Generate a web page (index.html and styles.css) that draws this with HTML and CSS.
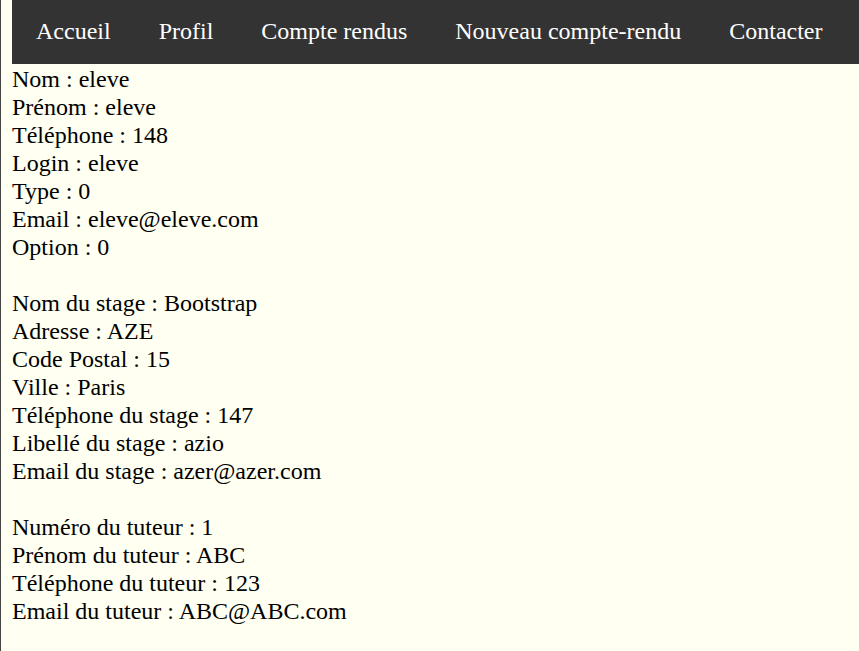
FILE: index.html
```html
<!DOCTYPE html>
<html lang="fr">
<head>
    <meta charset="UTF-8">
    <title>Profil</title>
    <link rel="stylesheet" href="styles.css">
</head>
<body>
    <ul class="menu">
        <li><a href="#">Accueil</a></li>
        <li><a href="#">Profil</a></li>
        <li><a href="#">Compte rendus</a></li>
        <li><a href="#">Nouveau compte-rendu</a></li>
        <li><a href="#">Contacter</a></li>
    </ul>

    <div class="infos">
        Nom : eleve<br>
        Prénom : eleve<br>
        Téléphone : 148<br>
        Login : eleve<br>
        Type : 0<br>
        Email : eleve@eleve.com<br>
        Option : 0<br>
        <br>
        Nom du stage : Bootstrap<br>
        Adresse : AZE<br>
        Code Postal : 15<br>
        Ville : Paris<br>
        Téléphone du stage : 147<br>
        Libellé du stage : azio<br>
        Email du stage : azer@azer.com<br>
        <br>
        Numéro du tuteur : 1<br>
        Prénom du tuteur : ABC<br>
        Téléphone du tuteur : 123<br>
        Email du tuteur : ABC@ABC.com
    </div>
</body>
</html>
```

FILE: styles.css
```css
html {
    border-left: 1px solid #444;
    min-height: 100%;
    box-sizing: border-box;
    background: #fffff2;
}

body {
    margin: 0 0 0 11px;
    font-family: "Liberation Serif", "Times New Roman", serif;
    font-size: 24px;
    line-height: 28px;
    color: #000;
}

.menu {
    list-style: none;
    margin: 0;
    padding: 0;
    height: 64px;
    background: #333;
    display: flex;
    overflow: hidden;
}

.menu li a {
    display: block;
    color: white;
    padding: 17px 24px 19px;
    text-decoration: none;
}

.infos {
    padding-top: 1px;
}
```
